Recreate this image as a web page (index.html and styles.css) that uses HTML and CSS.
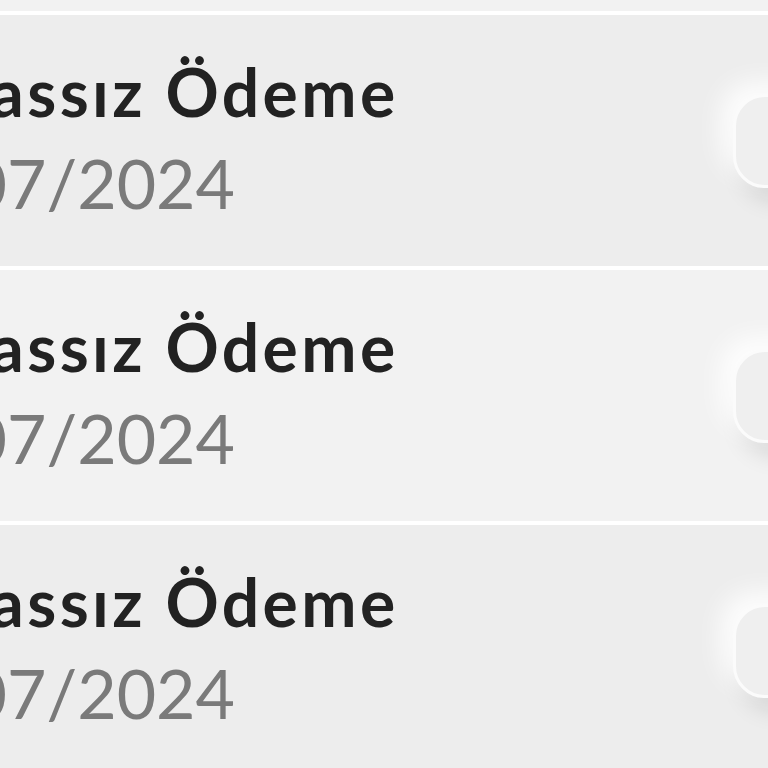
FILE: index.html
```html
<!DOCTYPE html>
<html lang="tr">
<head>
<meta charset="utf-8">
<link rel="stylesheet" href="styles.css">
</head>
<body>
<div class="list">
  <div class="row row-top"></div>
  <div class="row row-a">
    <div class="info">
      <div class="title">Temassız Ödeme</div>
      <div class="date">15/07/2024</div>
    </div>
    <div class="btn"></div>
  </div>
  <div class="row row-b">
    <div class="info">
      <div class="title">Temassız Ödeme</div>
      <div class="date">15/07/2024</div>
    </div>
    <div class="btn"></div>
  </div>
  <div class="row row-a">
    <div class="info">
      <div class="title">Temassız Ödeme</div>
      <div class="date">15/07/2024</div>
    </div>
    <div class="btn"></div>
  </div>
</div>
</body>
</html>
```
FILE: styles.css
```css
html, body {
  margin: 0;
  padding: 0;
  width: 768px;
  height: 768px;
  overflow: hidden;
  background: #ededed;
}
.list {
  display: flex;
  flex-direction: column;
  width: 768px;
}
.row {
  display: flex;
  align-items: center;
  justify-content: space-between;
  height: 251px;
  flex-shrink: 0;
  border-bottom: 4px solid #ffffff;
  box-sizing: content-box;
}
.row-top {
  height: 11px;
  background: #f2f2f2;
}
.row-a { background: #ededed; }
.row-b { background: #f2f2f2; }
.info {
  display: flex;
  flex-direction: column;
  margin-left: -142px;
  font-family: Lato, "Noto Sans", sans-serif;
}
.title {
  font-size: 66px;
  font-weight: 700;
  color: #222222;
  line-height: 80px;
  letter-spacing: 3.4px;
  white-space: nowrap;
}
.date {
  font-size: 68px;
  font-weight: 400;
  color: #7a7a7a;
  line-height: 94px;
  white-space: nowrap;
  margin-left: 0;
  margin-top: 4px;
}
.btn {
  width: 200px;
  height: 94px;
  margin-right: -165px;
  border-radius: 32px;
  background: #efefef;
  border: 3px solid #fbfbfb;
  box-sizing: border-box;
  box-shadow: -12px -12px 26px rgba(255,255,255,0.9), 10px 12px 24px rgba(0,0,0,0.12);
  flex-shrink: 0;
}
```
